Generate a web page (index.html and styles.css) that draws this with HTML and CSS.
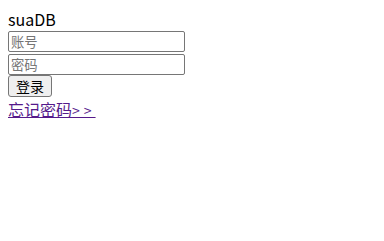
FILE: index.html
```html
<!DOCTYPE html>
<html>
<head>
<meta charset="utf-8">
<link rel="stylesheet" href="styles.css">
</head>
<body>
<div class="login">
  <div class="title">suaDB</div>
  <input class="field" type="text" placeholder="账号">
  <input class="field field-second" type="password" placeholder="密码">
  <button class="btn" type="button">登录</button>
  <a class="forgot" href="#">忘记密码<span class="arrows">&gt;&gt;</span></a>
</div>
</body>
</html>
```
FILE: styles.css
```css
html, body {
  background: #ffffff;
}
body {
  margin: 8px;
  font-family: "Noto Sans CJK SC", "Noto Sans", sans-serif;
  font-size: 16px;
  color: #000000;
}
.login {
  display: flex;
  flex-direction: column;
  align-items: flex-start;
}
.title {
  height: 23px;
  line-height: 23px;
  font-size: 16px;
}
.field {
  box-sizing: border-box;
  width: 177px;
  height: 21px;
  margin: 0;
  padding: 1px 2px;
  border: 1px solid #767676;
  border-radius: 2px;
  font-family: "Noto Sans CJK SC", sans-serif;
  font-size: 13.33px;
  background: #ffffff;
  outline: none;
}
.field::placeholder {
  color: #757575;
}
.field-second {
  margin-top: 2px;
}
.btn {
  box-sizing: border-box;
  height: 22px;
  margin: 0;
  padding: 0 7px;
  border: 1px solid #767676;
  border-radius: 3px;
  background: #efefef;
  font-family: "Noto Sans CJK SC", sans-serif;
  font-size: 14px;
  line-height: 18px;
  color: #000000;
}
.forgot {
  margin-top: 2px;
  font-size: 16px;
  line-height: 21px;
  color: #551a8b;
  text-decoration: underline;
}
.arrows {
  font-size: 14px;
  letter-spacing: 4px;
}
```
